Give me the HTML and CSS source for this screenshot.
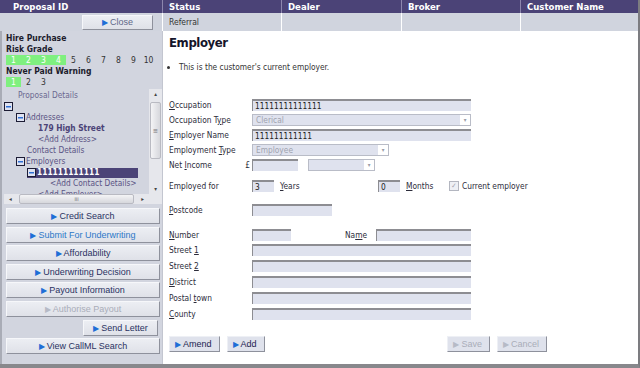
FILE: index.html
```html
<!DOCTYPE html>
<html lang="en">
<head>
  <meta charset="UTF-8">
  <title>Proposal - Employer</title>
  <link rel="stylesheet" href="styles.css">
</head>
<body>

  <div class="app">
    <div class="head">
      <div class="hcell first">Proposal ID</div>
      <div class="hcell">Status</div>
      <div class="hcell">Dealer</div>
      <div class="hcell">Broker</div>
      <div class="hcell">Customer Name</div>
    </div>
    <div class="sub">
      <div class="scell first"><button class="sbtn close"><span class="arr">&#9654;</span>Close</button></div>
      <div class="scell">Referral</div>
      <div class="scell"></div>
      <div class="scell"></div>
      <div class="scell"></div>
    </div>

    <div class="body">
      <aside class="side">
        <div class="ttl">Hire Purchase</div>
        <div class="ttl">Risk Grade</div>
        <div class="grades">
          <span class="on">1</span><span class="on">2</span><span class="on">3</span><span class="on">4</span>
          <span>5</span><span>6</span><span>7</span><span>8</span><span>9</span><span>10</span>
        </div>
        <div class="ttl">Never Paid Warning</div>
        <div class="grades">
          <span class="on">1</span><span>2</span><span>3</span>
        </div>

        <div class="tree">
          <div class="tree-view">
            <div class="node l1">Proposal Details</div>
            <div class="node l0"><i class="box"></i></div>
            <div class="node l1"><i class="box"></i>Addresses</div>
            <div class="node l3 bold">179 High Street</div>
            <div class="node l3">&lt;Add Address&gt;</div>
            <div class="node l2">Contact Details</div>
            <div class="node l1"><i class="box"></i>Employers</div>
            <div class="node l2"><span class="selected"><i class="box"></i>111111111111</span></div>
            <div class="node l4">&lt;Add Contact Details&gt;</div>
            <div class="node l3">&lt;Add Employer&gt;</div>
          </div>
          <div class="vscroll">
            <span class="sarrow">&#9652;</span>
            <span class="vthumb">&#8801;</span>
            <span class="sarrow">&#9662;</span>
          </div>
          <div class="hscroll">
            <span class="sarrow">&#9666;</span>
            <span class="hthumb">III</span>
            <span class="sarrow">&#9656;</span>
          </div>
          <div class="corner"></div>
        </div>

        <div class="actions">
          <button class="sbtn"><span class="arr">&#9654;</span>Credit Search</button>
          <button class="sbtn blue"><span class="arr">&#9654;</span>Submit For Underwriting</button>
          <button class="sbtn"><span class="arr">&#9654;</span>Affordability</button>
          <button class="sbtn"><span class="arr">&#9654;</span>Underwriting Decision</button>
          <button class="sbtn"><span class="arr">&#9654;</span>Payout Information</button>
          <button class="sbtn off"><span class="arr">&#9654;</span>Authorise Payout</button>
          <button class="sbtn short"><span class="arr">&#9654;</span>Send Letter</button>
          <button class="sbtn"><span class="arr">&#9654;</span>View CallML Search</button>
        </div>
      </aside>

      <main class="main">
        <h1>Employer</h1>
        <ul class="note">
          <li>This is the customer's current employer.</li>
        </ul>

        <div class="form">
          <div class="row">
            <label class="lbl"><u>O</u>ccupation</label>
            <input class="fld wide" value="11111111111111">
          </div>
          <div class="row">
            <label class="lbl">Occupation T<u>y</u>pe</label>
            <div class="sel wide">Clerical<span class="drop">&#9662;</span></div>
          </div>
          <div class="row">
            <label class="lbl"><u>E</u>mployer Name</label>
            <input class="fld wide" value="111111111111">
          </div>
          <div class="row">
            <label class="lbl">Employment <u>T</u>ype</label>
            <div class="sel mid">Employee<span class="drop">&#9662;</span></div>
          </div>
          <div class="row">
            <label class="lbl split"><span>Net <u>I</u>ncome</span><span>&pound;</span></label>
            <input class="fld money" value="">
            <div class="sel freq"><span class="drop">&#9662;</span></div>
          </div>

          <div class="row gap-a">
            <label class="lbl">Employed for</label>
            <input class="fld tiny" value="3">
            <span class="unit"><u>Y</u>ears</span>
            <input class="fld tiny" value="0">
            <span class="unit"><u>M</u>onths</span>
            <span class="check">&#10003;</span>
            <span class="chk-lbl">Current employer</span>
          </div>

          <div class="row gap-b">
            <label class="lbl"><u>P</u>ostcode</label>
            <input class="fld post" value="">
          </div>

          <div class="row gap-c">
            <label class="lbl"><u>N</u>umber</label>
            <input class="fld num" value="">
            <label class="name-lbl">Na<u>m</u>e</label>
            <input class="fld name" value="">
          </div>
          <div class="row tall">
            <label class="lbl">Street <u>1</u></label>
            <input class="fld wide" value="">
          </div>
          <div class="row tall">
            <label class="lbl">Street <u>2</u></label>
            <input class="fld wide" value="">
          </div>
          <div class="row tall">
            <label class="lbl"><u>D</u>istrict</label>
            <input class="fld wide" value="">
          </div>
          <div class="row tall">
            <label class="lbl">Postal <u>t</u>own</label>
            <input class="fld wide" value="">
          </div>
          <div class="row tall">
            <label class="lbl"><u>C</u>ounty</label>
            <input class="fld wide" value="">
          </div>
        </div>

        <div class="buttons">
          <button class="mbtn"><span class="arr">&#9654;</span>Amend</button>
          <button class="mbtn"><span class="arr">&#9654;</span>Add</button>
          <button class="mbtn off push"><span class="arr">&#9654;</span>Save</button>
          <button class="mbtn off"><span class="arr">&#9654;</span>Cancel</button>
        </div>
      </main>
    </div>
  </div>

</body>
</html>
```

FILE: styles.css
```css
body {
  margin: 0;
  background: #ffffff;
  font-family: 'DejaVu Sans Condensed', 'DejaVu Sans', sans-serif;
  font-size: 8.3px;
  color: #2c2c3a;
}

.app {
  width: 638px;
  height: 364px;
  border-right: 2px solid #7c7c80;
  border-bottom: 4px solid #88888c;
  display: flex;
  flex-direction: column;
  overflow: hidden;
}

/* top header bar */
.head,
.sub {
  display: grid;
  grid-template-columns: 162px 119px 120px 119px 118px;
}

.head {
  height: 13px;
  background: #4b4377;
}

.hcell {
  color: #fff;
  font-weight: bold;
  font-size: 9.5px;
  line-height: 13px;
  padding-left: 6px;
  border-left: 1px solid #8c86ad;
}

.hcell.first {
  padding-left: 13px;
  border-left: none;
}

.sub {
  height: 18px;
  background: #d0d4de;
}

.scell {
  line-height: 18px;
  padding-left: 6px;
  border-left: 1px solid #ffffff;
  font-size: 8.5px;
  color: #333;
}

.scell.first {
  border-left: none;
  display: flex;
  justify-content: flex-end;
  align-items: center;
  padding-right: 9px;
}

.body {
  flex: 1;
  display: grid;
  grid-template-columns: 162px 1fr;
  min-height: 0;
}

/* left side panel */
.side {
  background: #d2d5df;
  border-left: 2px solid #a9acb6;
  padding: 2px 2px 0 2px;
  display: flex;
  flex-direction: column;
}

.ttl {
  font-weight: bold;
  font-size: 8.5px;
  line-height: 11px;
  color: #1c1c2c;
  padding-left: 2px;
}

.grades {
  display: flex;
  height: 10px;
  padding-left: 2px;
  margin-bottom: 1px;
}

.grades span {
  width: 15px;
  text-align: center;
  line-height: 10px;
  font-size: 8.5px;
  color: #333;
}

.grades span.on {
  background: #7ff07f;
  color: #fff;
}

.tree {
  margin-top: 1px;
  display: grid;
  grid-template-columns: 1fr 13px;
  grid-template-rows: 105px 10px;
  width: 158px;
}

.tree-view {
  overflow: hidden;
  padding-top: 1px;
}

.node {
  height: 11px;
  line-height: 11px;
  white-space: nowrap;
  color: #5a5484;
  display: flex;
  align-items: center;
}

.node.l0 { padding-left: 0; }
.node.l1 { padding-left: 12px; }
.node.l2 { padding-left: 23px; }
.node.l3 { padding-left: 34px; }
.node.l4 { padding-left: 46px; }

.node.l1:first-child {
  padding-left: 14px;
  color: #6b6890;
}

.node.bold {
  font-weight: bold;
  color: #4b4377;
}

.box {
  width: 7px;
  height: 7px;
  border: 1px solid #1c1c34;
  background: #dfe3f2 linear-gradient(#2f6fd4, #2f6fd4) center / 5px 1.5px no-repeat;
  margin-right: 1px;
  display: inline-block;
}

.selected {
  display: flex;
  align-items: center;
  background: #4b4377;
  color: #fff;
  font-weight: bold;
  width: 111px;
  height: 10px;
}

.vscroll {
  grid-row: 1;
  grid-column: 2;
  background: #e6e7ec;
  display: flex;
  flex-direction: column;
  align-items: center;
}

.vthumb {
  margin: 3px 0 auto 0;
  width: 11px;
  height: 57px;
  background: linear-gradient(to right, #f4f4f6, #d6d7dc);
  border: 1px solid #b9bac2;
  border-radius: 2px;
  font-size: 7px;
  color: #777;
  display: flex;
  align-items: center;
  justify-content: center;
  box-sizing: border-box;
}

.sarrow {
  font-size: 6px;
  color: #444;
  line-height: 10px;
}

.hscroll {
  grid-row: 2;
  grid-column: 1;
  background: #e6e7ec;
  display: flex;
  align-items: center;
  padding: 0 5px;
  gap: 3px;
}

.hthumb {
  flex: 1;
  margin: 0 4px;
  height: 8px;
  background: linear-gradient(#f4f4f6, #d6d7dc);
  border: 1px solid #b9bac2;
  border-radius: 2px;
  font-size: 5px;
  line-height: 8px;
  text-align: center;
  color: #666;
}

.corner {
  background: #e6e7ec;
}

.actions {
  margin-top: 4px;
  display: flex;
  flex-direction: column;
  gap: 2.6px;
  padding-left: 2px;
}

.sbtn {
  height: 16px;
  width: 154px;
  background: linear-gradient(#eceef3, #dfe1e8);
  border: 1px solid;
  border-color: #f6f7fa #8e919c #8e919c #f6f7fa;
  font-family: 'Liberation Sans', Arial, sans-serif;
  font-size: 9px;
  color: #2a3262;
  padding: 0;
  cursor: pointer;
}

.sbtn .arr,
.mbtn .arr {
  color: #1e6ed6;
  font-size: 7.5px;
  margin-right: 2px;
}

.sbtn.blue { color: #2d78c8; }

.sbtn.off,
.mbtn.off { color: #a9adb9; }

.sbtn.off .arr,
.mbtn.off .arr { color: #b6bac6; }

.sbtn.short {
  width: 75px;
  align-self: flex-end;
  margin-right: 2px;
}

.sbtn.close {
  width: 71px;
  height: 15px;
  color: #5f6788;
}

/* main area */
.main {
  padding: 4px 6px 0 6px;
  border-left: 1px solid #c3c6d0;
}

h1 {
  margin: 0;
  font-size: 13px;
  letter-spacing: -0.4px;
  line-height: 16px;
  font-weight: bold;
  color: #15152a;
}

.note {
  margin: 11px 0 0 0;
  padding-left: 10px;
  line-height: 11px;
  color: #333;
}

.form {
  margin-top: 24px;
}

.row {
  display: flex;
  align-items: center;
  height: 15px;
}

.row.tall { height: 16px; }
.row.gap-a { margin-top: 6px; }
.row.gap-b { margin-top: 9px; }
.row.gap-c { margin-top: 10px; }

.lbl {
  width: 83px;
  flex-shrink: 0;
  color: #2c2c3a;
}

.lbl.split {
  display: flex;
  justify-content: space-between;
  padding-right: 2px;
  box-sizing: border-box;
}

.fld {
  height: 12px;
  box-sizing: border-box;
  background: #dfe2ee;
  border: none;
  border-top: 2px solid #8d8d92;
  border-left: 1px solid #8d8d92;
  padding: 0 0 0 2px;
  font-family: 'DejaVu Sans Condensed', 'DejaVu Sans', sans-serif;
  font-size: 8.3px;
  color: #222;
  outline: none;
}

.fld.wide { width: 219px; }
.fld.money { width: 46px; }
.fld.tiny { width: 22px; }
.fld.post { width: 80px; }
.fld.num { width: 39px; }
.fld.name { width: 95px; }

.sel {
  height: 12px;
  box-sizing: border-box;
  background: #dfe2ee;
  border: 1px solid #b9bcc7;
  color: #a0a3ae;
  padding-left: 3px;
  line-height: 10px;
  display: flex;
}

.sel.wide { width: 219px; }
.sel.mid { width: 137px; }
.sel.freq { width: 67px; margin-left: 10px; }

.drop {
  margin-left: auto;
  width: 10px;
  font-size: 6px;
  color: #9a9da8;
  text-align: center;
  background: #fff;
}

.unit {
  margin-left: 6px;
  width: 98px;
}

.check {
  width: 10px;
  height: 10px;
  box-sizing: border-box;
  border: 1px solid #b3b6c0;
  background: #eef0f5;
  font-size: 7px;
  line-height: 8px;
  color: #a0a3ad;
  text-align: center;
  margin-left: -55px;
}

.chk-lbl {
  margin-left: 3px;
}

.name-lbl {
  margin-left: 54px;
  width: 31px;
}

.buttons {
  margin-top: 14px;
  display: flex;
  gap: 7px;
  width: 378px;
}

.mbtn {
  height: 16px;
  background: #dfe2ec;
  border: 1px solid;
  border-color: #eef0f5 #8e919c #8e919c #eef0f5;
  font-family: 'Liberation Sans', Arial, sans-serif;
  font-size: 9px;
  color: #1d2350;
  padding: 0 7px 0 5px;
  cursor: pointer;
}

.mbtn.push { margin-left: auto; }
```
